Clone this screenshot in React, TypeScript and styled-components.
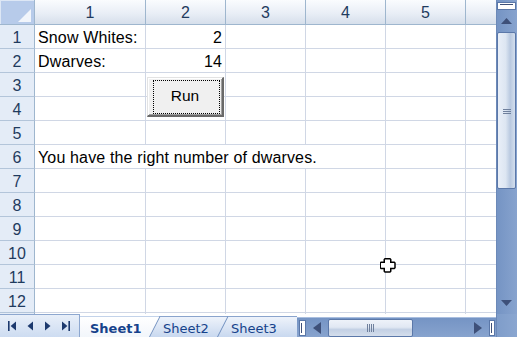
import React from "react";
import styled, { createGlobalStyle } from "styled-components";

const GlobalStyle = createGlobalStyle`
  *, *::before, *::after { box-sizing: border-box; }
  html, body { margin: 0; padding: 0; background: #fff; overflow: hidden; }
`;

type Entry = { text: string; align?: "left" | "right"; span?: number };

const COLUMNS = ["1", "2", "3", "4", "5", "6"];
const ROW_COUNT = 13;
const DATA: Record<number, Entry[]> = {
  1: [{ text: "Snow Whites:" }, { text: "2", align: "right" }],
  2: [{ text: "Dwarves:" }, { text: "14", align: "right" }],
  6: [{ text: "You have the right number of dwarves.", span: 4 }],
};
const SHEETS = [
  { name: "Sheet1", width: 80, active: true },
  { name: "Sheet2", width: 68 },
  { name: "Sheet3", width: 69 },
];

export default function App() {
  const rows = Array.from({ length: ROW_COUNT }, (_, i) => i + 1);

  return (
    <>
      <GlobalStyle />
      <Window>
        <SheetArea>
          <Grid>
            <Corner>
              <CornerMark />
            </Corner>
            {COLUMNS.map((c) => (
              <ColHeader key={c}>{c}</ColHeader>
            ))}
            {rows.map((r) => {
              const entries = DATA[r] || [];
              const used = entries.reduce((n, e) => n + (e.span || 1), 0);
              const blanks = Array.from({ length: COLUMNS.length - used });
              return (
                <React.Fragment key={r}>
                  <RowHeader>{r}</RowHeader>
                  {entries.map((e, i) => (
                    <Cell key={i} $align={e.align} $span={e.span}>
                      {e.text}
                    </Cell>
                  ))}
                  {blanks.map((_, i) => (
                    <Cell key={"b" + i} />
                  ))}
                </React.Fragment>
              );
            })}
          </Grid>

          <RunButton>
            <FocusRing />
            Run
          </RunButton>

          <Cursor width="16" height="15" viewBox="0 0 16 15">
            <path
              d="M5 0.75 H10 L10.75 1.5 V4.25 H14.25 L15 5 V9.75 L14.25 10.5 H10.75 V13.25 L10 14 H5 L4.25 13.25 V10.5 H1 L0.25 9.75 V5 L1 4.25 H4.25 V1.5 Z"
              fill="#fff"
              stroke="#000"
              strokeWidth="1.5"
            />
          </Cursor>
        </SheetArea>

        <VScroll>
          <SplitBoxV />
          <ArrowV>
            <svg width="11" height="6" viewBox="0 0 11 6">
              <polygon points="5.5,0 11,6 0,6" fill="#3e5079" />
            </svg>
          </ArrowV>
          <ThumbV>
            <GripV />
          </ThumbV>
          <Fill />
          <ArrowV>
            <svg width="11" height="6" viewBox="0 0 11 6">
              <polygon points="0,0 11,0 5.5,6" fill="#3e5079" />
            </svg>
          </ArrowV>
        </VScroll>

        <BottomBar>
          <Nav>
            <NavButton>
              <svg width="8" height="10" viewBox="0 0 8 10">
                <rect x="0" y="0" width="1.6" height="10" fill="#1d3a6e" />
                <polygon points="8,0.5 8,9.5 2.6,5" fill="#1d3a6e" />
              </svg>
            </NavButton>
            <NavButton>
              <svg width="6" height="10" viewBox="0 0 6 10">
                <polygon points="6,0.5 6,9.5 0.5,5" fill="#1d3a6e" />
              </svg>
            </NavButton>
            <NavButton>
              <svg width="6" height="10" viewBox="0 0 6 10">
                <polygon points="0,0.5 0,9.5 5.5,5" fill="#1d3a6e" />
              </svg>
            </NavButton>
            <NavButton>
              <svg width="8" height="10" viewBox="0 0 8 10">
                <polygon points="0,0.5 0,9.5 5.4,5" fill="#1d3a6e" />
                <rect x="6.4" y="0" width="1.6" height="10" fill="#1d3a6e" />
              </svg>
            </NavButton>
          </Nav>

          {SHEETS.map((s) => (
            <Tab key={s.name} $active={s.active} $w={s.width}>
              {s.name}
            </Tab>
          ))}

          <HScroll>
            <SplitBoxH />
            <ArrowH>
              <svg width="8" height="12" viewBox="0 0 8 12">
                <polygon points="8,0 8,12 0,6" fill="#3e5079" />
              </svg>
            </ArrowH>
            <ThumbH>
              <GripH />
            </ThumbH>
            <Fill />
            <ArrowH>
              <svg width="8" height="12" viewBox="0 0 8 12">
                <polygon points="0,0 0,12 8,6" fill="#3e5079" />
              </svg>
            </ArrowH>
            <EndBoxH />
          </HScroll>
        </BottomBar>

        <ScrollCorner />
      </Window>
    </>
  );
}

const Window = styled.div`
  width: 517px;
  height: 337px;
  display: grid;
  grid-template-columns: 496px 21px;
  grid-template-rows: 314px 23px;
  overflow: hidden;
  background: #fff;
  font-family: "Liberation Sans", Arial, sans-serif;
`;

const SheetArea = styled.div`
  position: relative;
  overflow: hidden;
`;

const Grid = styled.div`
  display: grid;
  grid-template-columns: 35px 111px repeat(5, 80px);
  grid-template-rows: 25px;
  grid-auto-rows: 24px;
  width: max-content;
  font-size: 16px;
  line-height: 18px;
`;

const Corner = styled.div`
  display: flex;
  align-items: flex-end;
  justify-content: flex-end;
  padding: 0 3px 2px 0;
  background: #b7cbea;
  border-right: 1px solid #9eb6ce;
  border-bottom: 1px solid #9eb6ce;
  box-shadow: inset 1px 1px #dde7f5;
`;

const CornerMark = styled.div`
  width: 0;
  height: 0;
  border-left: 13px solid transparent;
  border-bottom: 13px solid #f1f5fb;
`;

const ColHeader = styled.div`
  display: flex;
  align-items: flex-end;
  justify-content: center;
  padding-bottom: 2px;
  color: #1f3b5e;
  background: linear-gradient(#fafcfe, #e9eef6 55%, #d6dfeb);
  border-right: 1px solid #9eb6ce;
  border-bottom: 1px solid #9eb6ce;
`;

const RowHeader = styled.div`
  display: flex;
  align-items: flex-end;
  justify-content: center;
  padding-bottom: 1px;
  color: #1f3b5e;
  background: #e4ecf7;
  border-right: 1px solid #9eb6ce;
  border-bottom: 1px solid #b3c5da;
`;

const Cell = styled.div<{ $align?: "left" | "right"; $span?: number }>`
  grid-column: span ${(p) => p.$span || 1};
  display: flex;
  align-items: flex-end;
  justify-content: ${(p) => (p.$align === "right" ? "flex-end" : "flex-start")};
  padding: 0 3px 1px;
  white-space: nowrap;
  letter-spacing: 0.15px;
  color: #000;
  border-right: 1px solid #d0d7e5;
  border-bottom: 1px solid #d0d7e5;
`;

const RunButton = styled.button`
  position: absolute;
  left: 147px;
  top: 77px;
  width: 77px;
  height: 40px;
  padding: 0 0 1px;
  display: flex;
  align-items: center;
  justify-content: center;
  background: #f0f0f0;
  border-style: solid;
  border-width: 1px 2px 2px 1px;
  border-color: #e3e3e3 #696969 #696969 #e3e3e3;
  box-shadow: inset 1px 1px #fff, inset -1px -1px #a0a0a0;
  font-family: "Liberation Sans", Arial, sans-serif;
  font-size: 15.5px;
  color: #000;
`;

const FocusRing = styled.span`
  position: absolute;
  left: 5px;
  top: 2px;
  width: 67px;
  height: 34px;
  border: 1px dotted #000;
`;

const Cursor = styled.svg`
  position: absolute;
  left: 380px;
  top: 258px;
  pointer-events: none;
`;

const VScroll = styled.div`
  display: flex;
  flex-direction: column;
  background: linear-gradient(to right, #7594c4, #87a3ce);
  border-left: 1px solid #6c89b8;
`;

const SplitBoxV = styled.div`
  position: relative;
  height: 8px;
  margin: 2px 1px 0 0;
  background: #fff;
  border: 1px solid #5a77a8;

  &::after {
    content: "";
    position: absolute;
    left: 2px;
    right: 2px;
    top: 1px;
    height: 1px;
    background: #3e5079;
  }
`;

const ArrowV = styled.div`
  height: 22px;
  display: flex;
  align-items: center;
  justify-content: center;
  padding-right: 1px;
`;

const ThumbV = styled.div`
  height: 157px;
  margin-right: 1px;
  display: flex;
  align-items: center;
  justify-content: center;
  border: 1px solid #5b78a9;
  border-radius: 2px;
  background: linear-gradient(
    to right,
    #e9eff8 0%,
    #dde6f2 45%,
    #b9c9e0 72%,
    #d3deed 100%
  );
`;

const GripV = styled.div`
  width: 8px;
  height: 5px;
  margin-top: 2px;
  background: repeating-linear-gradient(#6f809d 0 1px, transparent 1px 2px);
`;

const Fill = styled.div`
  flex: 1;
`;

const BottomBar = styled.div`
  display: flex;
  align-items: flex-end;
  background: #fff;
`;

const Nav = styled.div`
  width: 80px;
  height: 23px;
  display: flex;
  align-items: center;
  padding: 0 0 0 3px;
  background: linear-gradient(#e8eff9, #cddcf1);
  border-top: 1px solid #8da7cf;
  border-right: 1px solid #8da7cf;
`;

const NavButton = styled.div`
  width: 18px;
  height: 100%;
  display: flex;
  align-items: center;
  justify-content: center;
`;

const Tab = styled.div<{ $active?: boolean; $w: number }>`
  position: relative;
  z-index: 0;
  width: ${(p) => p.$w}px;
  height: 21px;
  display: flex;
  align-items: flex-end;
  padding: 0 0 1px ${(p) => (p.$active ? 10 : 3)}px;
  font-family: "DejaVu Sans", Verdana, sans-serif;
  font-size: 13px;
  line-height: 15px;
  font-weight: ${(p) => (p.$active ? 700 : 400)};
  color: #15428b;
  white-space: nowrap;
  background: ${(p) =>
    p.$active ? "linear-gradient(#ffffff, #f2f6fb)" : "linear-gradient(#eef3fb, #c8d8ef)"};
  border-top: 1px solid ${(p) => (p.$active ? "#c3d3ea" : "#8aa4cd")};

  &::before {
    content: "";
    display: ${(p) => (p.$active ? "none" : "block")};
    position: absolute;
    z-index: -1;
    left: -11px;
    top: -1px;
    bottom: 0;
    width: 14px;
    background: linear-gradient(#eef3fb, #c8d8ef);
    border-left: 1px solid #7190c0;
    border-top: 1px solid #8aa4cd;
    transform: skewX(-27deg);
    transform-origin: bottom left;
  }
`;

const HScroll = styled.div`
  flex: 1;
  height: 20px;
  display: flex;
  align-items: center;
  padding: 0 1px 0 2px;
  background: linear-gradient(#7594c4, #87a3ce);
  border-top: 1px solid #a9bedf;
`;

const SplitBoxH = styled.div`
  position: relative;
  width: 7px;
  height: 16px;
  background: #fff;
  border: 1px solid #5a77a8;

  &::after {
    content: "";
    position: absolute;
    top: 2px;
    bottom: 2px;
    left: 1px;
    width: 1px;
    background: #3e5079;
  }
`;

const ArrowH = styled.div`
  width: 21px;
  height: 100%;
  display: flex;
  align-items: center;
  justify-content: center;
`;

const ThumbH = styled.div`
  width: 85px;
  height: 18px;
  margin-left: 1px;
  display: flex;
  align-items: center;
  justify-content: center;
  border: 1px solid #5b78a9;
  border-radius: 2px;
  background: linear-gradient(#eef2f9 0%, #e1e8f3 45%, #c3d0e4 60%, #d4deec 100%);
`;

const GripH = styled.div`
  width: 7px;
  height: 8px;
  background: repeating-linear-gradient(to right, #6f809d 0 1px, transparent 1px 2px);
`;

const EndBoxH = styled(SplitBoxH)`
  width: 6px;
  margin-left: 1px;
`;

const ScrollCorner = styled.div`
  background: linear-gradient(to right, #7f9dca, #8aa6d0);
  border-left: 1px solid #6c89b8;
`;
